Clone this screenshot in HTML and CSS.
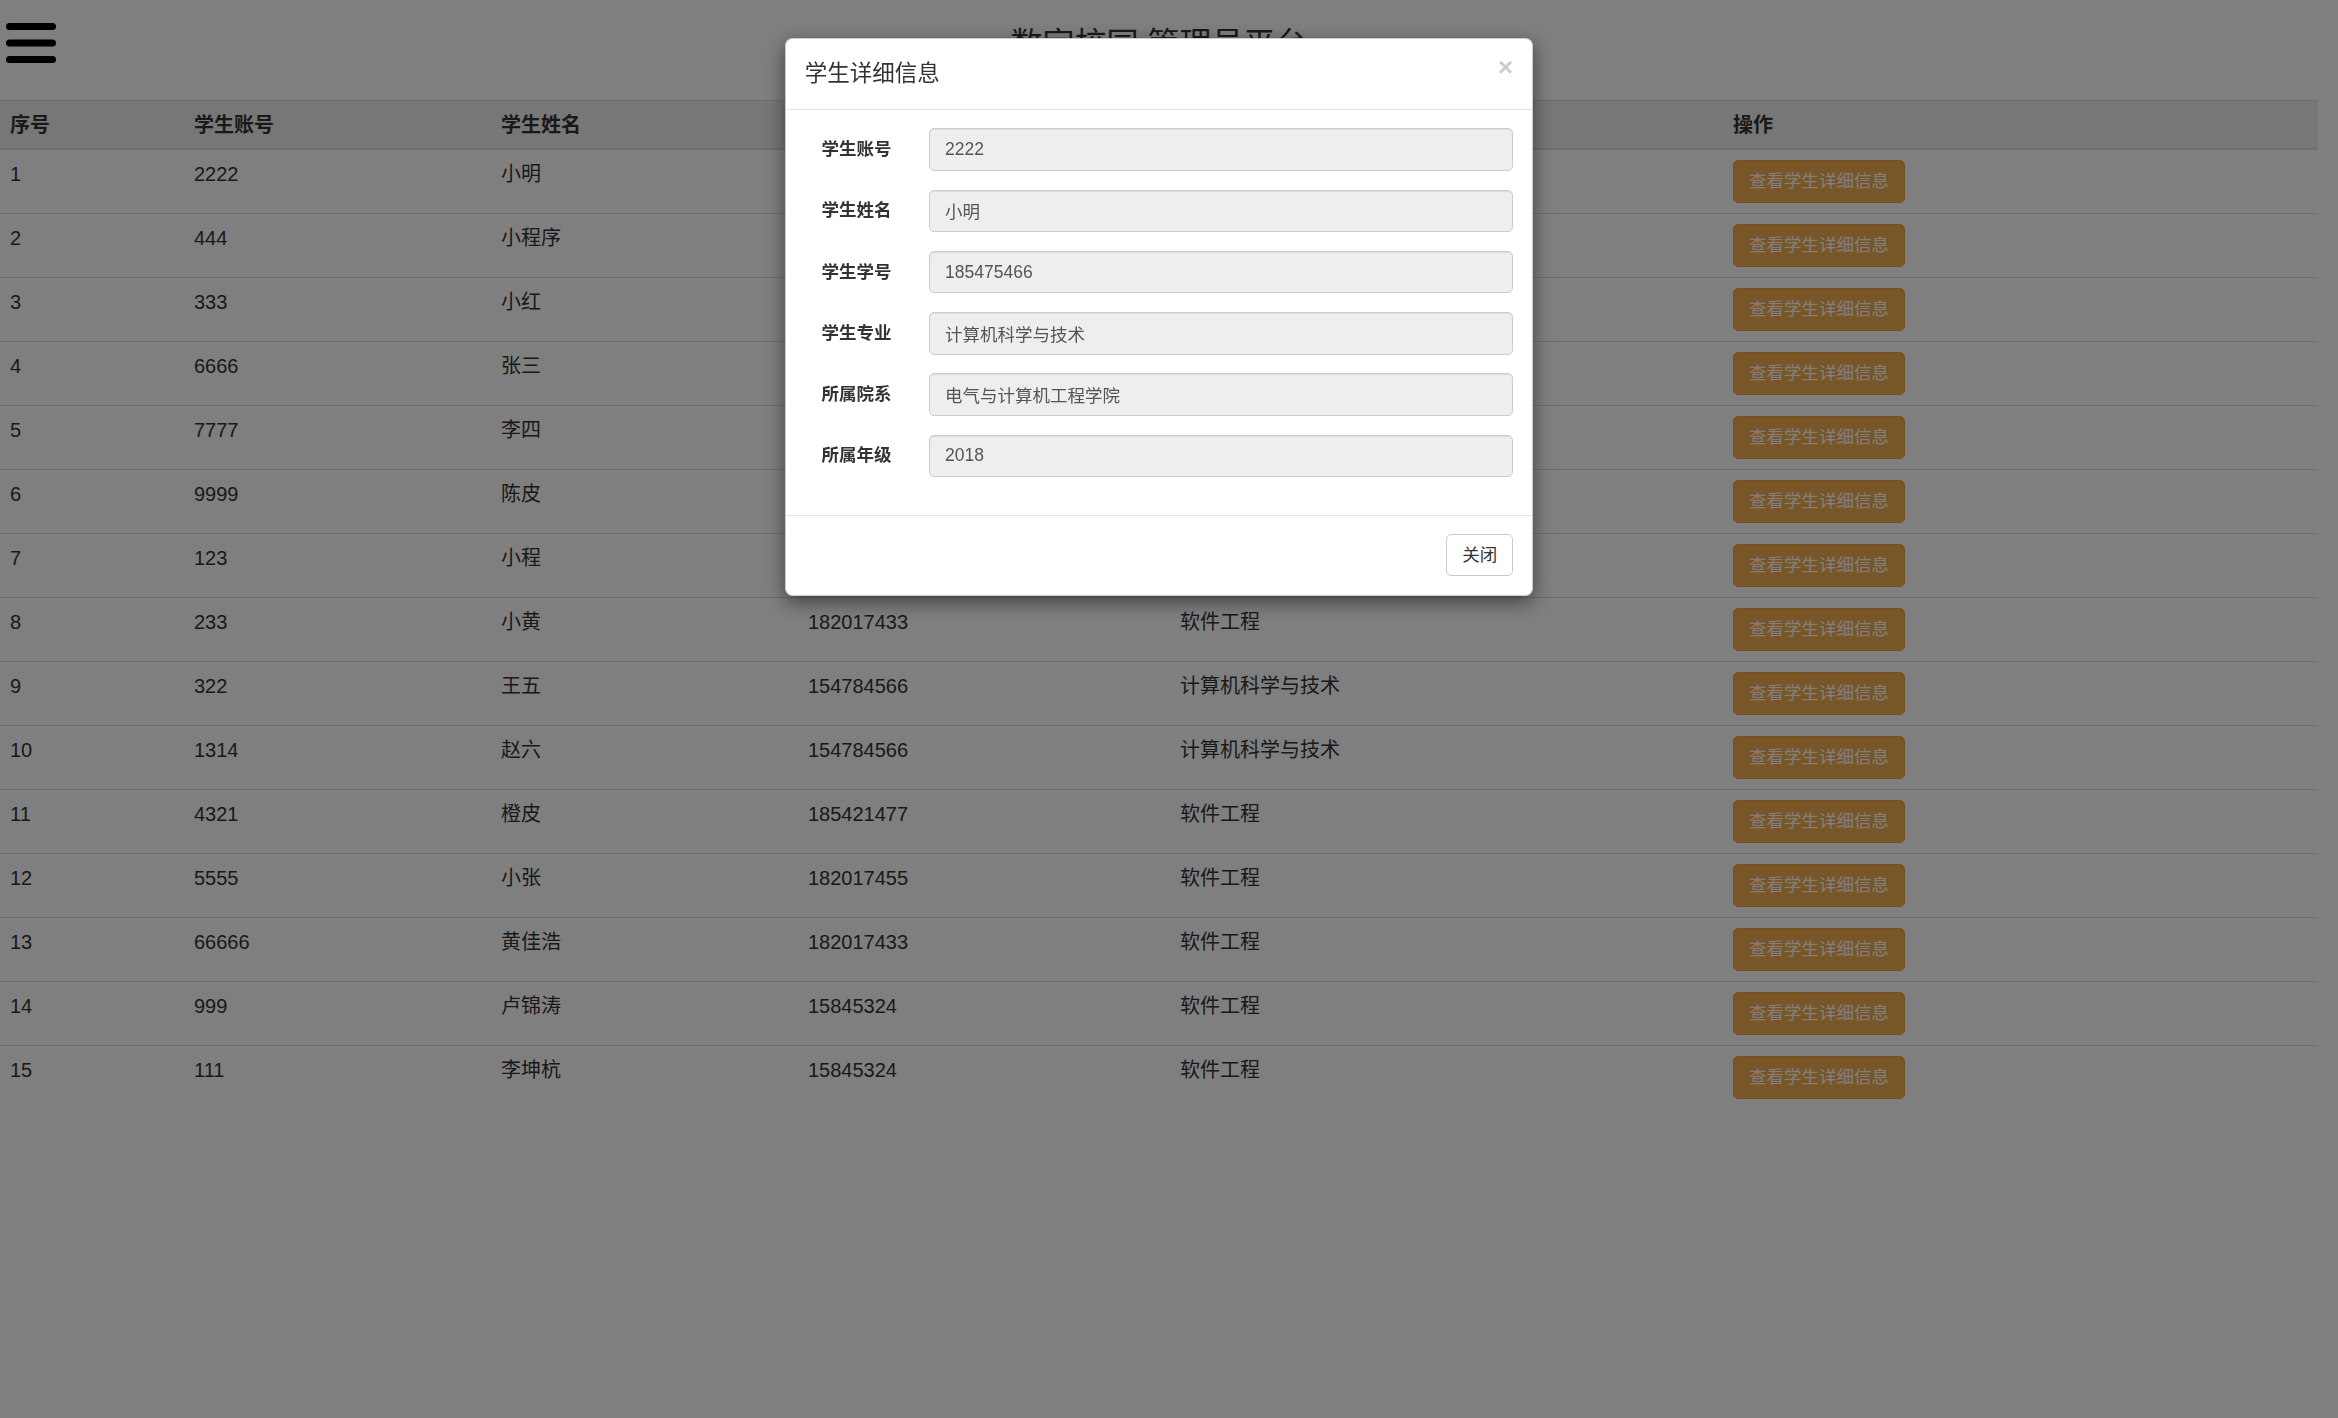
FILE: index.html
```html
<!DOCTYPE html>
<html lang="zh-CN">
<head>
<meta charset="utf-8">
<title>数字校园 管理员平台</title>
<link rel="stylesheet" href="styles.css">
</head>
<body>
<div class="topbar">
  <svg class="menu-icon" viewBox="0 0 50 40" aria-hidden="true">
    <rect x="0" y="0" width="50" height="7" rx="3.5" fill="#000"/>
    <rect x="0" y="16.5" width="50" height="7" rx="3.5" fill="#000"/>
    <rect x="0" y="33" width="50" height="7" rx="3.5" fill="#000"/>
  </svg>
  <h2 class="page-title">数字校园 管理员平台</h2>
  <div></div>
</div>

<table class="table">
  <colgroup>
    <col class="c1"><col class="c2"><col class="c3"><col class="c4"><col class="c5"><col class="c6">
  </colgroup>
  <thead>
    <tr><th>序号</th><th>学生账号</th><th>学生姓名</th><th>学生学号</th><th>学生专业</th><th>操作</th></tr>
  </thead>
  <tbody>
    <tr><td>1</td><td>2222</td><td>小明</td><td>185475466</td><td>计算机科学与技术</td><td><button class="btn btn-warning">查看学生详细信息</button></td></tr>
    <tr><td>2</td><td>444</td><td>小程序</td><td>182017433</td><td>软件工程</td><td><button class="btn btn-warning">查看学生详细信息</button></td></tr>
    <tr><td>3</td><td>333</td><td>小红</td><td>182017433</td><td>软件工程</td><td><button class="btn btn-warning">查看学生详细信息</button></td></tr>
    <tr><td>4</td><td>6666</td><td>张三</td><td>154784566</td><td>计算机科学与技术</td><td><button class="btn btn-warning">查看学生详细信息</button></td></tr>
    <tr><td>5</td><td>7777</td><td>李四</td><td>154784566</td><td>计算机科学与技术</td><td><button class="btn btn-warning">查看学生详细信息</button></td></tr>
    <tr><td>6</td><td>9999</td><td>陈皮</td><td>185421477</td><td>软件工程</td><td><button class="btn btn-warning">查看学生详细信息</button></td></tr>
    <tr><td>7</td><td>123</td><td>小程</td><td>182017455</td><td>软件工程</td><td><button class="btn btn-warning">查看学生详细信息</button></td></tr>
    <tr><td>8</td><td>233</td><td>小黄</td><td>182017433</td><td>软件工程</td><td><button class="btn btn-warning">查看学生详细信息</button></td></tr>
    <tr><td>9</td><td>322</td><td>王五</td><td>154784566</td><td>计算机科学与技术</td><td><button class="btn btn-warning">查看学生详细信息</button></td></tr>
    <tr><td>10</td><td>1314</td><td>赵六</td><td>154784566</td><td>计算机科学与技术</td><td><button class="btn btn-warning">查看学生详细信息</button></td></tr>
    <tr><td>11</td><td>4321</td><td>橙皮</td><td>185421477</td><td>软件工程</td><td><button class="btn btn-warning">查看学生详细信息</button></td></tr>
    <tr><td>12</td><td>5555</td><td>小张</td><td>182017455</td><td>软件工程</td><td><button class="btn btn-warning">查看学生详细信息</button></td></tr>
    <tr><td>13</td><td>66666</td><td>黄佳浩</td><td>182017433</td><td>软件工程</td><td><button class="btn btn-warning">查看学生详细信息</button></td></tr>
    <tr><td>14</td><td>999</td><td>卢锦涛</td><td>15845324</td><td>软件工程</td><td><button class="btn btn-warning">查看学生详细信息</button></td></tr>
    <tr><td>15</td><td>111</td><td>李坤杭</td><td>15845324</td><td>软件工程</td><td><button class="btn btn-warning">查看学生详细信息</button></td></tr>
  </tbody>
</table>

<div class="modal-backdrop"></div>
<div class="modal">
  <div class="modal-dialog">
    <div class="modal-content">
      <div class="modal-header">
        <h4 class="modal-title">学生详细信息</h4>
        <button class="close" type="button">&times;</button>
      </div>
      <div class="modal-body">
        <div class="form-row"><label class="form-label">学生账号</label><div class="form-field"><input class="form-control" value="2222" readonly></div></div>
        <div class="form-row"><label class="form-label">学生姓名</label><div class="form-field"><input class="form-control" value="小明" readonly></div></div>
        <div class="form-row"><label class="form-label">学生学号</label><div class="form-field"><input class="form-control" value="185475466" readonly></div></div>
        <div class="form-row"><label class="form-label">学生专业</label><div class="form-field"><input class="form-control" value="计算机科学与技术" readonly></div></div>
        <div class="form-row"><label class="form-label">所属院系</label><div class="form-field"><input class="form-control" value="电气与计算机工程学院" readonly></div></div>
        <div class="form-row"><label class="form-label">所属年级</label><div class="form-field"><input class="form-control" value="2018" readonly></div></div>
      </div>
      <div class="modal-footer">
        <button class="btn btn-default" type="button">关闭</button>
      </div>
    </div>
  </div>
</div>
</body>
</html>
```

FILE: styles.css
```css
* { box-sizing: border-box; }

html, body { margin: 0; }

body {
  font-family: "Liberation Sans", "Noto Sans CJK SC", sans-serif;
  font-size: 20px;
  line-height: 28px;
  color: #333;
  background: #fff;
  padding-right: 20px;
  overflow: hidden;
  height: 1418px;
}

.topbar {
  height: 100px;
  display: grid;
  grid-template-columns: 1fr auto 1fr;
  align-items: start;
}

.menu-icon {
  display: block;
  width: 50px;
  height: 40px;
  margin: 23px 0 0 6px;
}

.page-title {
  margin: 24px 0 0;
  font-size: 32px;
  line-height: 40px;
  font-weight: normal;
}

.table {
  width: 100%;
  border-collapse: separate;
  border-spacing: 0;
  table-layout: fixed;
}

.c1 { width: 184px; }
.c2 { width: 307px; }
.c3 { width: 307px; }
.c4 { width: 372px; }
.c5 { width: 553px; }
.c6 { width: auto; }

.table th,
.table td {
  text-align: left;
  vertical-align: top;
  padding: 10px;
  border-top: 1px solid #ddd;
}

.table thead th {
  padding: 11px 10px 10px;
  background: #eee;
  font-weight: bold;
  line-height: 26px;
  border-bottom: 2px solid #ddd;
}

.table tbody tr:first-child td {
  border-top: 0;
}

.btn {
  display: inline-block;
  vertical-align: top;
  font-family: inherit;
  cursor: pointer;
  white-space: nowrap;
  margin: 0;
}

.btn-warning {
  font-size: 17.5px;
  line-height: 25px;
  padding: 8px 15px;
  color: #fff;
  background: #f0ad4e;
  border: 1px solid #eea236;
  border-radius: 5px;
}

.btn-default {
  font-size: 17.5px;
  line-height: 25px;
  padding: 7.5px 15px;
  color: #333;
  background: #fff;
  border: 1px solid #ccc;
  border-radius: 5px;
}

.modal-backdrop {
  position: fixed;
  inset: 0;
  background: #000;
  opacity: 0.5;
}

.modal {
  position: fixed;
  inset: 0;
  padding-right: 20px;
  overflow: hidden;
}

.modal-dialog {
  width: 748px;
  margin: 38px auto;
}

.modal-content {
  background: #fff;
  border: 1px solid rgba(0, 0, 0, 0.2);
  border-radius: 7.5px;
  box-shadow: 0 6px 19px rgba(0, 0, 0, 0.5);
}

.modal-header {
  display: flex;
  justify-content: space-between;
  align-items: flex-start;
  padding: 18.75px;
  border-bottom: 1px solid #e5e5e5;
}

.modal-title {
  margin: 0;
  font-size: 22.5px;
  line-height: 32px;
  font-weight: normal;
  color: #333;
}

.close {
  font-family: "Liberation Sans", sans-serif;
  font-size: 26px;
  font-weight: bold;
  line-height: 1;
  color: #000;
  opacity: 0.2;
  background: none;
  border: 0;
  padding: 0;
  margin-top: -3.5px;
  cursor: pointer;
}

.modal-body {
  padding: 18.75px;
}

.form-row {
  display: grid;
  grid-template-columns: 16.6667% 83.3333%;
  margin: 0 -18.75px 18.75px;
}

.form-label {
  padding: 8.75px 18.75px 0;
  text-align: right;
  font-weight: bold;
  font-size: 17.5px;
  line-height: 25px;
}

.form-field {
  padding: 0 18.75px;
}

.form-control {
  display: block;
  width: 100%;
  height: 42.5px;
  padding: 7.5px 15px;
  font-family: inherit;
  font-size: 17.5px;
  line-height: 25px;
  color: #555;
  background: #eee;
  border: 1px solid #ccc;
  border-radius: 5px;
  box-shadow: inset 0 1px 1px rgba(0, 0, 0, 0.075);
  outline: none;
}

.modal-footer {
  padding: 18.75px;
  border-top: 1px solid #e5e5e5;
  text-align: right;
}
```
